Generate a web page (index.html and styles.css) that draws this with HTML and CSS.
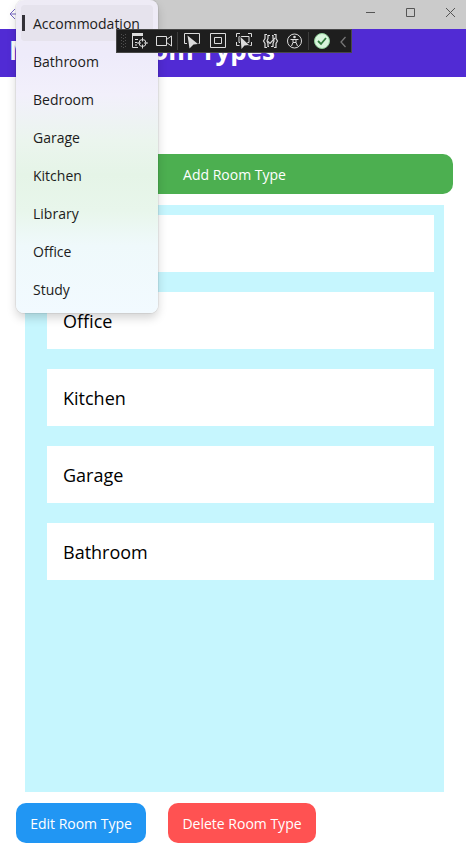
FILE: index.html
```html
<!DOCTYPE html>
<html lang="en">
<head>
<meta charset="utf-8">
<title>Manage Room Types</title>
<link rel="stylesheet" href="styles.css">
</head>
<body>
<div class="titlebar">
  <svg class="back" width="12" height="12" viewBox="0 0 12 12"><path d="M6 1 1 6l5 5M1 6h10"/></svg>
  <div class="window-controls">
    <svg width="40" height="29" viewBox="0 0 40 29"><path d="M16 12.500h9"/></svg>
    <svg width="40" height="29" viewBox="0 0 40 29"><path d="M16.500 8.500h8v8h-8z"/></svg>
    <svg width="40" height="29" viewBox="0 0 40 29"><path d="m16 8 9 9m0-9-9 9"/></svg>
  </div>
</div>
<header class="header"><h1>Manage Room Types</h1></header>
<main>
  <button class="btn add">Add Room Type</button>
  <ul class="rooms">
    <li></li>
    <li>Office</li>
    <li>Kitchen</li>
    <li>Garage</li>
    <li>Bathroom</li>
  </ul>
  <div class="actions">
    <button class="btn edit">Edit Room Type</button>
    <button class="btn delete">Delete Room Type</button>
  </div>
</main>
<ul class="menu">
  <li class="selected">Accommodation</li>
  <li>Bathroom</li>
  <li>Bedroom</li>
  <li>Garage</li>
  <li>Kitchen</li>
  <li>Library</li>
  <li>Office</li>
  <li>Study</li>
</ul>
<div class="toolbar">
  <svg width="236" height="24" viewBox="0 0 236 24">
    <path class="grip" d="M5.500 5v15M7.500 6v14M9.500 5v15"/>
    <path class="sep" d="M61.500 3v18M192.500 3v18"/>
    <g class="tree">
      <path class="fill" d="M16 4h11v3H16z"/>
      <path d="M16.500 6v12.500H22M19 10.500h3M19 13.500h2M19 16h2"/>
      <circle cx="26.500" cy="14" r="3.500"/>
      <path d="M26.500 8.500v4M26.500 15.500v4M21 14h4M28 14h4"/>
    </g>
    <g class="camera"><path d="M40.500 7.500h10v9h-10zM50.500 10.500l5-3.500v10l-5-3.500"/></g>
    <g class="pointer">
      <path d="M71 14.500h-2.500v-10h15v10h-4"/>
      <path class="fill cut" d="m71.500 6.500 10.500 8.500-4.500.5-4 4z"/>
    </g>
    <path d="M94.500 4.500h15v14h-15zM98.500 8.500h7v6h-7z"/>
    <g class="focus">
      <path d="M120.500 8V4.500h3.500M132 4.500h3.500V8M135.500 13v3.500H132M123.500 16.500h-3V13M124 13.500h-1v-6h10v6h-2"/>
      <path class="fill cut" d="m124.500 8 8.500 8-4.500.5-3 3.500z"/>
    </g>
    <g class="reload">
      <path d="M151 5.500h-2v4l-1.500 2.500 1.500 2.500v4h2M158 5.500h2v4l1.500 2.500-1.500 2.500v4h-2M154 6.500h-2v3l-1 2.500 1 2.500v3h1M156 6.500h1v3l1 2.500-1 2.500v3h-2"/>
      <path d="m151.500 12 2.500 2.500 5-5.500"/>
    </g>
    <g class="access">
      <circle cx="178.500" cy="12" r="7"/>
      <circle class="fill" cx="178.500" cy="8" r="1.300"/>
      <path d="M174.500 10.500h8M177 10.500v3l-1.500 3.500M180 10.500v3l1.500 3.500M177 13.500h3"/>
    </g>
    <circle class="status" cx="206" cy="12" r="7.500"/>
    <path class="check" d="m202 12 3 3 5-6"/>
    <path class="chevron" d="m229.500 8-4.500 5 4.500 5"/>
  </svg>
</div>
</body>
</html>
```

FILE: styles.css
```css
* { box-sizing: border-box; }
body {
  position: relative;
  width: 466px;
  height: 858px;
  margin: 0;
  overflow: hidden;
  background: #fff;
  font-family: "Open Sans", sans-serif;
}
ul { margin: 0; padding: 0; list-style: none; }
svg { display: block; }
.titlebar {
  display: flex;
  justify-content: space-between;
  height: 29px;
  background: linear-gradient(90deg, #fff 50px, #cbcbcb 50px);
}
.back { margin: 8px 0 0 9px; fill: none; stroke: #7565c4; }
.window-controls { display: flex; margin-right: -4px; fill: none; stroke: #555; }
.header { height: 48px; padding-left: 9px; background: #512bd4; overflow: hidden; }
h1 {
  margin: 0;
  color: #fff;
  font-size: 26px;
  font-weight: 700;
  line-height: 43px;
  white-space: nowrap;
}
main { padding: 77px 13px 0 16px; }
.btn {
  display: block;
  height: 40px;
  padding: 2px 0 0;
  border: 0;
  border-radius: 10px;
  color: #fff;
  font: 14px/38px "Open Sans", sans-serif;
}
.add { width: 437px; background: #4caf50; }
.rooms {
  display: grid;
  grid-auto-rows: 57px;
  gap: 20px;
  align-content: start;
  width: 419px;
  height: 587px;
  margin: 11px 0 11px 9px;
  padding: 10px 10px 0 22px;
  background: #c6f6fe;
}
.rooms li { padding-left: 16px; background: #fff; color: #000; font-size: 18px; line-height: 58px; }
.actions { display: flex; gap: 22px; }
.edit { width: 130px; background: #2196f3; }
.delete { width: 148px; background: #ff5252; }
.menu {
  position: absolute;
  top: 0;
  left: 16px;
  width: 142px;
  height: 313px;
  padding-top: 5px;
  border-radius: 8px;
  background: linear-gradient(#eeebf5 0, #eeebfa 55px, #f2f0fb 95px, #ebf5ee 140px, #e5f4e7 175px, #e8f6eb 210px, #eff9fb 245px, #f2faff 313px);
  box-shadow: 0 0 0 1px rgba(0, 0, 0, .06), 0 5px 10px rgba(0, 0, 0, .17);
}
.menu li {
  height: 38px;
  padding-left: 17px;
  color: #1c1c20;
  font-size: 14px;
  line-height: 38px;
}
.menu .selected {
  height: 36px;
  margin: 0 5px 2px;
  padding-left: 12px;
  border-radius: 4px;
  background: linear-gradient(#333138, #333138) 1px 10px / 3px 16px no-repeat, #e6e3ed;
}
.toolbar {
  position: absolute;
  top: 29px;
  left: 116px;
  width: 236px;
  height: 24px;
  border: 1px solid #484848;
  background: #1e1e1e;
}
.toolbar svg { margin: -1px; fill: none; stroke: #dcdcdc; }
.toolbar .fill { fill: #dcdcdc; stroke: none; }
.toolbar .cut { stroke: #1e1e1e; stroke-width: 1.500; paint-order: stroke; }
.toolbar .reload { stroke-width: 1.200; }
.toolbar .grip { stroke: #505050; stroke-dasharray: 1 2; }
.toolbar .sep { stroke: #3d3d3d; }
.toolbar .status { fill: #d8f5dc; stroke: #8fcf98; }
.toolbar .check { stroke: #2f7a3c; stroke-width: 1.8; }
.toolbar .chevron { stroke: #777; stroke-width: 1.300; }
```
